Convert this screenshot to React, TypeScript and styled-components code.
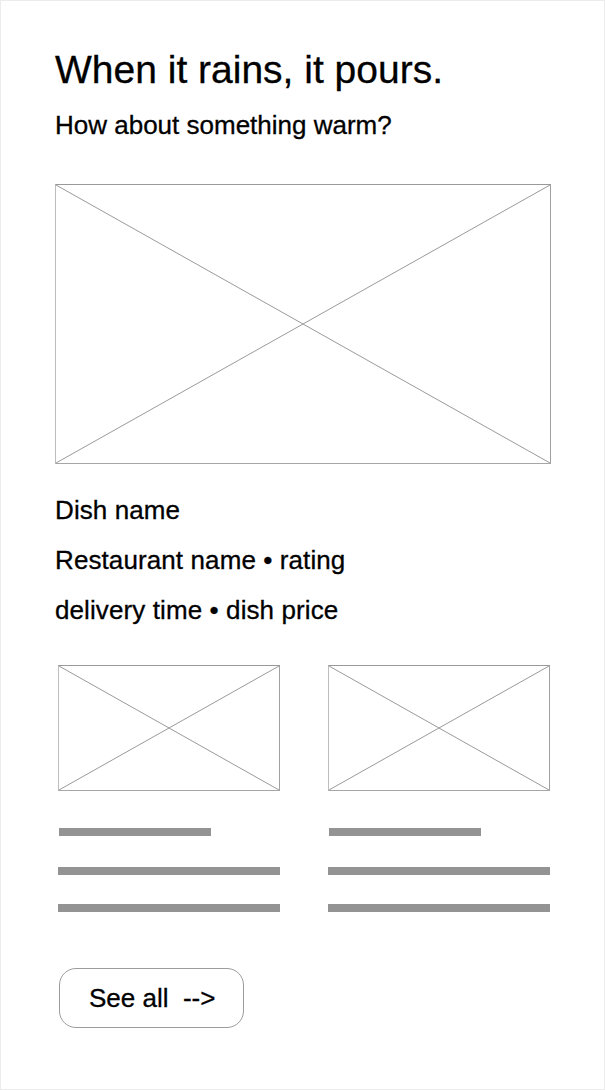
import React from 'react';
import styled, { createGlobalStyle } from 'styled-components';

const GlobalStyle = createGlobalStyle`
  body {
    margin: 0;
    background: #ffffff;
    font-family: "Liberation Sans", Arial, Helvetica, sans-serif;
    color: #000000;
  }
`;

const Page = styled.div`
  box-sizing: border-box;
  width: 605px;
  height: 1090px;
  border: 1px solid #ececec;
  padding: 47px 54px 0 54px;
  display: flex;
  flex-direction: column;
  align-items: flex-start;
  -webkit-text-stroke: 0.3px #000000;
`;

const Title = styled.h1`
  margin: 0;
  font-size: 39px;
  line-height: 44px;
  font-weight: 400;
`;

const Subtitle = styled.p`
  margin: 18px 0 0 0;
  font-size: 26px;
  line-height: 30px;
`;

const Frame = styled.div<{ $w: number; $h: number }>`
  box-sizing: border-box;
  width: ${(p) => p.$w}px;
  height: ${(p) => p.$h}px;
  border-top: 1px solid #999999;
  border-bottom: 1px solid #a6a6a6;
  border-left: 1px solid #bdbdbd;
  border-right: 1px solid #a0a0a0;
  display: flex;

  svg {
    width: 100%;
    height: 100%;
    display: block;
  }
`;

const HeroFrame = styled.div`
  margin-top: 44px;
`;

const Info = styled.div`
  margin-top: 21px;
  display: flex;
  flex-direction: column;
`;

const InfoLine = styled.div`
  font-size: 26px;
  line-height: 50px;
  letter-spacing: 0.1px;
`;

const Cards = styled.div`
  margin-top: 30px;
  padding-left: 3px;
  display: grid;
  grid-template-columns: 222px 222px;
  column-gap: 48px;
`;

const Card = styled.div`
  display: flex;
  flex-direction: column;
  align-items: flex-start;
`;

const Bar = styled.div<{ $short?: boolean; $top: number }>`
  margin-top: ${(p) => p.$top}px;
  margin-left: ${(p) => (p.$short ? 1 : 0)}px;
  width: ${(p) => (p.$short ? 152 : 222)}px;
  height: 8px;
  background: #939393;
`;

const SeeAll = styled.button`
  box-sizing: border-box;
  margin: 56px 0 0 4px;
  width: 185px;
  height: 60px;
  border: 1px solid #9c9c9c;
  border-radius: 17px;
  background: #ffffff;
  padding: 0 0 0 29px;
  display: flex;
  align-items: center;
  font-family: "Liberation Sans", Arial, Helvetica, sans-serif;
  font-size: 26px;
  color: #000000;
  -webkit-text-stroke: 0.3px #000000;
  white-space: pre;
  cursor: pointer;
`;

const Placeholder: React.FC<{ w: number; h: number }> = ({ w, h }) => (
  <Frame $w={w} $h={h}>
    <svg viewBox="0 0 100 100" preserveAspectRatio="none">
      <line x1="0" y1="0" x2="100" y2="100" stroke="#9a9a9a" strokeWidth="1" vectorEffect="non-scaling-stroke" />
      <line x1="100" y1="0" x2="0" y2="100" stroke="#9a9a9a" strokeWidth="1" vectorEffect="non-scaling-stroke" />
    </svg>
  </Frame>
);

const MiniCard: React.FC = () => (
  <Card>
    <Placeholder w={222} h={126} />
    <Bar $short $top={37} />
    <Bar $top={31} />
    <Bar $top={29} />
  </Card>
);

const App: React.FC = () => {
  return (
    <>
      <GlobalStyle />
      <Page>
        <Title>When it rains, it pours.</Title>
        <Subtitle>How about something warm?</Subtitle>

        <HeroFrame>
          <Placeholder w={496} h={280} />
        </HeroFrame>

        <Info>
          <InfoLine>Dish name</InfoLine>
          <InfoLine>Restaurant name • rating</InfoLine>
          <InfoLine>delivery time • dish price</InfoLine>
        </Info>

        <Cards>
          <MiniCard />
          <MiniCard />
        </Cards>

        <SeeAll>{'See all  -->'}</SeeAll>
      </Page>
    </>
  );
};

export default App;
